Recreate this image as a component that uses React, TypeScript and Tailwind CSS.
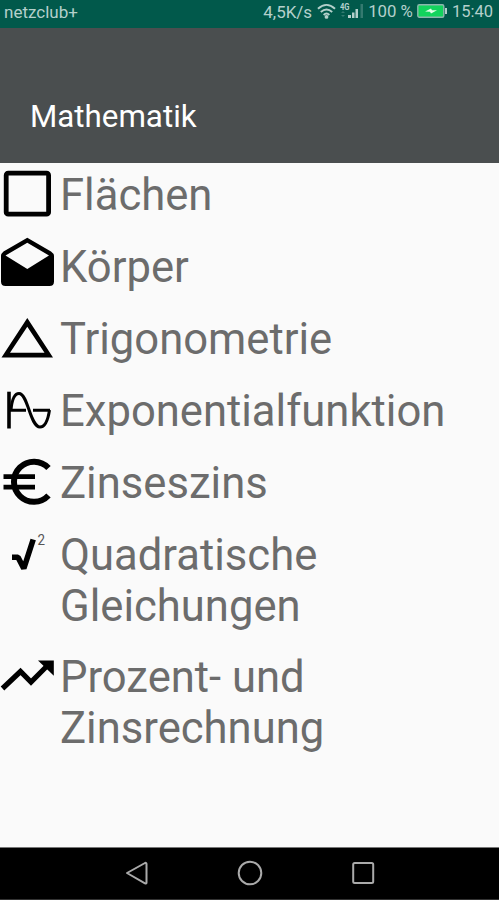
import type { ReactNode } from "react";

interface Topic {
  label: string;
  icon: ReactNode;
}

const topics: Topic[] = [
  {
    label: "Flächen",
    icon: <rect x="6.2" y="4.2" width="42.4" height="41" rx="2" fill="none" stroke="#000" strokeWidth="4.8" />,
  },
  {
    label: "Körper",
    icon: (
      <path
        fillRule="evenodd"
        d="M27.3-3.2 51 10.5Q54 12.5 54 15V40.5Q54 45 49.5 45H5.5Q1 45 1 40.5V15Q1 12.5 3.5 10.5ZM27.3 1.8 5.5 14.5 27.3 28 49 14.5Z"
      />
    ),
  },
  {
    label: "Trigonometrie",
    icon: <path fillRule="evenodd" d="M27.3 5 53 44.5H1.5ZM27.3 13.8 10 39.7H44.5Z" />,
  },
  {
    label: "Exponentialfunktion",
    icon: (
      <g fill="none" stroke="#000" strokeWidth="3">
        <path d="M9 6.7V43.5" strokeWidth="3.6" />
        <path d="M10 25.2H26M33 25.2H50" />
        <path d="M11 25C12 14 15 8.500 19 8.500C28 8.500 30 42 40 42C45 42 48 35 49.500 25" />
      </g>
    ),
  },
  {
    label: "Zinseszins",
    icon: (
      <g fill="none" stroke="#000">
        <path d="M48.5 11A20 20 0 1 0 48.5 38.5" strokeWidth="6" />
        <path d="M3.5 19.7H35M3.5 30.2H35" strokeWidth="4.8" />
      </g>
    ),
  },
  {
    label: "Quadratische Gleichungen",
    icon: (
      <>
        <path
          d="M12 28.3H18L23.8 39.500L33.200 10.500"
          fill="none"
          stroke="#000"
          strokeWidth="5.6"
          strokeLinejoin="bevel"
        />
        <text x="37.5" y="15.5" fontSize="15" fill="#555" textLength="7.5" lengthAdjust="spacingAndGlyphs">
          2
        </text>
      </>
    ),
  },
  {
    label: "Prozent- und Zinsrechnung",
    icon: (
      <>
        <path d="M2.5 37.5 20.5 20.5 31 31 48 14" fill="none" stroke="#000" strokeWidth="5.2" />
        <path d="M38 9.5H53.8V24.8Z" />
      </>
    ),
  },
];

function StatusBar() {
  return (
    <div className="flex h-7 items-start bg-[#01594b] pt-[3px] pr-[6px] pl-1 text-[17px] leading-[18px] text-[#b4d0cb]">
      <span className="mr-auto">netzclub+</span>
      <span>4,5K/s</span>
      <svg className="ml-[5px] h-[18px] w-[19px]" viewBox="0 0 20 18" fill="none" stroke="#b4d0cb" strokeWidth="2">
        <path d="M1 5.500Q10-2.500 19 5.500M4 9Q10 3.700 16 9M7 12.200Q10 9.200 13 12.200" />
        <circle cx="10" cy="14.200" r="1" />
      </svg>
      <svg className="ml-1 h-[18px] w-[24px]" viewBox="0 0 24 18" fill="#b4d0cb">
        <text x="0" y="6.5" fontSize="8.500" fontWeight="700" textLength="9.500" lengthAdjust="spacingAndGlyphs">
          4G
        </text>
        <path d="M8 12h3v3H8zM12 9.500h2.500V15H12zM15.500 6h2.500v9H15.500z" />
        <path d="M20.500 1H23v14h-2.500z" fill="#347a70" />
        <path d="M1 10 3 8 5 10ZM1 12 3 14 5 12Z" fill="#347a70" />
      </svg>
      <span className="-mt-px ml-1 text-[16.8px]">100 %</span>
      <svg className="ml-1 h-[18px] w-[30px]" viewBox="0 0 30 18">
        <rect x=".8" y="1.800" width="26" height="12.400" rx="1.500" fill="#12d45d" stroke="#8cb7ae" strokeWidth="1.400" />
        <path d="M28 5h2v6h-2z" fill="#b4d0cb" />
        <path d="M8 8.500 14 5.500 15 7.300H20L14 10.500 13 8.700Z" fill="#e2ffe9" />
      </svg>
      <span className="ml-[5px] text-[16.5px]">15:40</span>
    </div>
  );
}

function NavBar() {
  return (
    <div className="flex h-[53px] items-start justify-center gap-[87px] border-y border-t-[#777] border-b-[#333] bg-black pt-3">
      <svg className="h-[26px] w-[26px]" viewBox="0 0 26 26" fill="none" stroke="#aaa" strokeWidth="2">
        <path d="M3 13 21 3Q22.5 2.5 22.5 4V22.5Q22.5 24 21 23.3Z" strokeLinejoin="round" />
      </svg>
      <svg className="h-[26px] w-[26px]" viewBox="0 0 26 26" fill="none" stroke="#aaa" strokeWidth="2">
        <circle cx="13" cy="13" r="11.3" />
      </svg>
      <svg className="h-[26px] w-[26px]" viewBox="0 0 26 26" fill="none" stroke="#aaa" strokeWidth="2">
        <rect x="3.2" y="3" width="20" height="20" rx="1.5" />
      </svg>
    </div>
  );
}

export default function App() {
  return (
    <div className="flex h-[900px] w-[499px] flex-col bg-[#fafafa] font-[Roboto,sans-serif]">
      <StatusBar />
      <header className="flex h-[135px] items-end bg-[#4a4e4f] pb-[28px] pl-[30px]">
        <h1 className="text-[31.3px] leading-9 text-white">Mathematik</h1>
      </header>
      <main className="flex flex-1 flex-col gap-[21px] pt-[6px]">
        {topics.map((topic) => (
          <div key={topic.label} className="flex last:-mt-px">
            <svg className="h-[51px] w-[60px] shrink-0 overflow-visible" viewBox="0 0 60 51">
              {topic.icon}
            </svg>
            <span className="-mb-px w-[400px] pt-px text-[43.6px] leading-[51px] text-[#6c6c6c]">{topic.label}</span>
          </div>
        ))}
      </main>
      <NavBar />
    </div>
  );
}
